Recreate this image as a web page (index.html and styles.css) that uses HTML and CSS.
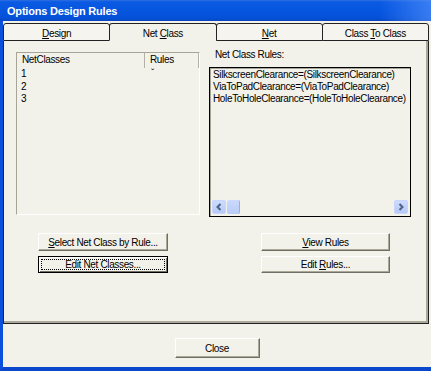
FILE: index.html
```html
<!DOCTYPE html>
<html lang="en">
<head>
    <title>Options Design Rules</title>
    <link rel="stylesheet" href="styles.css">
</head>
<body>
    <div class="window">
        <div class="titlebar">Options Design Rules</div>
        <div class="client">
            <div class="tabs">
                <div class="tab"><u>D</u>esign</div>
                <div class="tab active">Net <u>C</u>lass</div>
                <div class="tab"><u>N</u>et</div>
                <div class="tab">Class <u>T</u>o Class</div>
            </div>

            <div class="panel">
                <div class="top-row">
                    <div class="listbox">
                        <div class="head name">NetClasses</div>
                        <div class="head rules">Rules</div>
                        <div class="cell name">1</div><div class="cell rules">ˇ</div>
                        <div class="cell name">2</div><div class="cell rules"></div>
                        <div class="cell name">3</div><div class="cell rules"></div>
                    </div>

                    <div class="rules-col">
                        <div class="rules-label">Net Class Rules:</div>
                        <div class="rules-box">
                            <div class="rules-text">
                                <div>SilkscreenClearance=(SilkscreenClearance)</div>
                                <div>ViaToPadClearance=(ViaToPadClearance)</div>
                                <div>HoleToHoleClearance=(HoleToHoleClearance)</div>
                            </div>
                            <!-- horizontal scrollbar -->
                            <div class="hscroll">
                                <div class="sb-btn">
                                    <svg width="8" height="8" viewBox="0 0 8 8"><path d="M5.5 1 L2.5 4 L5.5 7" fill="none" stroke="#4d6185" stroke-width="2"/></svg>
                                </div>
                                <div class="sb-thumb"></div>
                                <div class="sb-track"></div>
                                <div class="sb-btn">
                                    <svg width="8" height="8" viewBox="0 0 8 8"><path d="M2.5 1 L5.5 4 L2.5 7" fill="none" stroke="#4d6185" stroke-width="2"/></svg>
                                </div>
                            </div>
                        </div>
                    </div>
                </div>

                <div class="button-grid">
                    <button class="btn"><u>S</u>elect Net Class by Rule...</button>
                    <button class="btn"><u>V</u>iew Rules</button>
                    <button class="btn default"><span class="focus">Edit Net Classes...</span></button>
                    <button class="btn">Edit <u>R</u>ules...</button>
                </div>
            </div>

            <div class="footer">
                <button class="btn close">Close</button>
            </div>
        </div>
    </div>
</body>
</html>
```

FILE: styles.css
```css
* {
    box-sizing: border-box;
}
body {
    margin: 0;
    font-family: "Liberation Sans", Arial, sans-serif;
    font-size: 10px;
    letter-spacing: -0.35px;
    color: #000;
}
.window {
    width: 431px;
    height: 371px;
    display: flex;
    flex-direction: column;
    background: #f3f2ea;
}
.titlebar {
    height: 21px;
    padding: 1px 0 0 7px;
    line-height: 20px;
    color: #fff;
    font-weight: bold;
    font-size: 11px;
    letter-spacing: -0.2px;
    background:
        linear-gradient(to right, rgba(90, 150, 255, 0) 88%, rgba(90, 150, 255, 0.6)),
        linear-gradient(to bottom, #2f6fe0 0, #0a5ae4 2px, #0656e0 10px, #0551d8 18px, #0746c2 21px);
}
.client {
    flex: 1;
    display: flex;
    flex-direction: column;
    border-left: 3px solid #0b50dc;
    border-bottom: 4px solid #0a47cc;
}

/* tabs */
.tabs {
    display: flex;
    width: 426px;
    height: 18px;
    margin-top: 2px;
}
.tab {
    flex: 1;
    margin-left: -1px;
    border: 1px solid #222;
    border-radius: 3px 3px 0 0;
    padding-top: 3px;
    line-height: 13px;
    text-align: center;
    background: #f5f4ee;
}
.tab:first-child {
    margin-left: 0;
}
.tab.active {
    border-bottom-color: transparent;
    background: #f3f2ea;
}

/* panel */
.panel {
    width: 426px;
    height: 283px;
    border: 1px solid #222;
    border-top: none;
    box-shadow: inset -2px -2px 0 #aca899;
    padding: 11px 12px 0 12px;
}
.top-row {
    display: flex;
    align-items: flex-start;
    gap: 9px;
}
.listbox {
    width: 184px;
    height: 163px;
    display: grid;
    grid-template-columns: 128px 54px;
    grid-template-rows: 15px repeat(3, 12.5px);
    align-content: start;
    border: 1px solid #fff;
    border-top-color: #a7a597;
    border-left-color: #a7a597;
}
.head {
    line-height: 14px;
    padding-left: 5px;
    border-right: 1px solid #b3b1a5;
}
.cell {
    line-height: 12.5px;
}
.cell.name {
    padding-left: 4px;
}
.cell.rules {
    padding-left: 6px;
}
.rules-col {
    width: 202px;
}
.rules-label {
    margin: -3px 0 6px 0;
    padding-left: 6px;
    line-height: 12px;
}
.rules-box {
    height: 150px;
    display: flex;
    flex-direction: column;
    border: 1px solid #000;
    box-shadow: inset 1px 1px 0 #a7a597;
}
.rules-text {
    padding: 1px 0 0 3px;
    line-height: 12px;
    white-space: nowrap;
    overflow: hidden;
}
.hscroll {
    display: flex;
    height: 14px;
    margin: auto 2px 2px 2px;
}
.sb-btn {
    width: 14px;
    display: flex;
    align-items: center;
    justify-content: center;
    border-radius: 2px;
    background: linear-gradient(to bottom, #cddcfd, #b6c9f7);
    border: 1px solid #c5d5fb;
}
.sb-thumb {
    width: 13px;
    margin-left: 1px;
    border-radius: 2px;
    background: linear-gradient(to bottom, #cbdafd, #b8cbf8);
    border-right: 1px solid #98aee8;
}
.sb-track {
    flex: 1;
}

/* buttons */
.btn {
    font: inherit;
    letter-spacing: inherit;
    color: #000;
    padding: 0;
    background: #f3f2ea;
    border: 1px solid;
    border-color: #fff #716f64 #716f64 #fff;
    box-shadow: inset -1px -1px 0 #aca899;
}
.button-grid {
    display: grid;
    grid-template-columns: 130px 129px;
    grid-template-rows: 18px 17px;
    column-gap: 93px;
    row-gap: 5px;
    margin: 16px 0 0 22px;
}
.btn.default {
    border-color: #000;
    box-shadow: inset 1px 1px 0 #fff, inset -1px -1px 0 #716f64;
}
.focus {
    display: block;
    height: 11px;
    margin: 0 2px;
    border: 1px dotted #000;
    line-height: 9px;
}
.footer {
    display: flex;
    justify-content: center;
    padding-top: 14px;
}
.btn.close {
    width: 85px;
    height: 20px;
}
```
